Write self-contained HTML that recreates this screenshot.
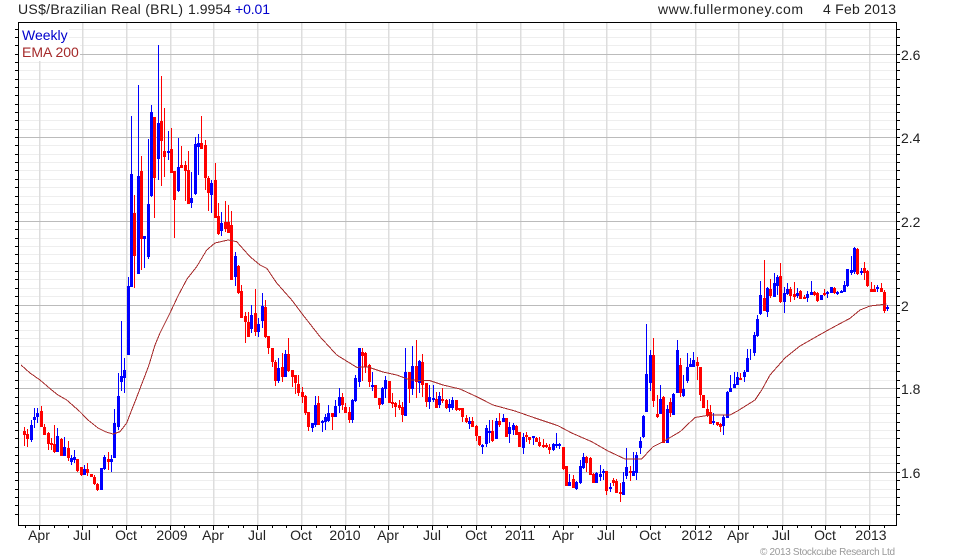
<!DOCTYPE html>
<html><head><meta charset="utf-8"><title>USD/BRL</title>
<style>
html,body{margin:0;padding:0;background:#fff}
svg{display:block}
text{font-family:"Liberation Sans",Arial,sans-serif;font-size:14px;fill:#222}
</style></head>
<body>
<svg xmlns="http://www.w3.org/2000/svg" width="980" height="560" viewBox="0 0 980 560">
<rect width="980" height="560" fill="#fff"/>
<g shape-rendering="crispEdges" fill="none">
<!-- minor horizontal -->
<path stroke="#eeeeee" stroke-width="1" d="M19 29.5H896M19 37.5H896M19 45.5H896M19 62.5H896M19 70.5H896M19 79.5H896M19 87.5H896M19 95.5H896M19 104.5H896M19 112.5H896M19 120.5H896M19 129.5H896M19 145.5H896M19 154.5H896M19 162.5H896M19 170.5H896M19 179.5H896M19 187.5H896M19 196.5H896M19 204.5H896M19 212.5H896M19 229.5H896M19 238.5H896M19 246.5H896M19 254.5H896M19 263.5H896M19 271.5H896M19 279.5H896M19 288.5H896M19 296.5H896M19 313.5H896M19 321.5H896M19 330.5H896M19 338.5H896M19 346.5H896M19 355.5H896M19 363.5H896M19 371.5H896M19 380.5H896M19 397.5H896M19 405.5H896M19 413.5H896M19 422.5H896M19 430.5H896M19 438.5H896M19 447.5H896M19 455.5H896M19 463.5H896M19 480.5H896M19 489.5H896M19 497.5H896M19 505.5H896M19 514.5H896"/>
<!-- vertical -->
<path stroke="#dddddd" stroke-width="1.5" d="M39.5 23V525M82.5 23V525M126.5 23V525M170.5 23V525M213.5 23V525M257.5 23V525M301.5 23V525M345.5 23V525M388.5 23V525M432.5 23V525M476.5 23V525M520.5 23V525M563.5 23V525M606.5 23V525M650.5 23V525M695.5 23V525M738.5 23V525M782.5 23V525M825.5 23V525M869.5 23V525"/>
<!-- major horizontal -->
<path stroke="#bbbbbb" stroke-width="1" d="M19 54.5H896M19 137.5H896M19 221.5H896M19 305.5H896M19 388.5H896M19 472.5H896"/>
<!-- legend background -->
<rect x="19" y="23" width="50" height="22" fill="#fff"/>
<rect x="19" y="45" width="61" height="16" fill="#fff"/>
<!-- frame -->
<path stroke="#000" stroke-width="1" d="M18.5 22.5H896.5V525.5H18.5Z"/>
<!-- y ticks -->
<path stroke="#000" stroke-width="1" d="M15 29.5H18M15 37.5H18M15 45.5H18M15 54.5H18M15 62.5H18M15 70.5H18M15 79.5H18M15 87.5H18M15 95.5H18M15 104.5H18M15 112.5H18M15 120.5H18M15 129.5H18M15 137.5H18M15 145.5H18M15 154.5H18M15 162.5H18M15 170.5H18M15 179.5H18M15 187.5H18M15 196.5H18M15 204.5H18M15 212.5H18M15 221.5H18M15 229.5H18M15 238.5H18M15 246.5H18M15 254.5H18M15 263.5H18M15 271.5H18M15 279.5H18M15 288.5H18M15 296.5H18M15 305.5H18M15 313.5H18M15 321.5H18M15 330.5H18M15 338.5H18M15 346.5H18M15 355.5H18M15 363.5H18M15 371.5H18M15 380.5H18M15 388.5H18M15 397.5H18M15 405.5H18M15 413.5H18M15 422.5H18M15 430.5H18M15 438.5H18M15 447.5H18M15 455.5H18M15 463.5H18M15 472.5H18M15 480.5H18M15 489.5H18M15 497.5H18M15 505.5H18M15 514.5H18"/>
<path stroke="#000" stroke-width="1" d="M897 29.5H900M897 37.5H900M897 45.5H900M897 54.5H900M897 62.5H900M897 70.5H900M897 79.5H900M897 87.5H900M897 95.5H900M897 104.5H900M897 112.5H900M897 120.5H900M897 129.5H900M897 137.5H900M897 145.5H900M897 154.5H900M897 162.5H900M897 170.5H900M897 179.5H900M897 187.5H900M897 196.5H900M897 204.5H900M897 212.5H900M897 221.5H900M897 229.5H900M897 238.5H900M897 246.5H900M897 254.5H900M897 263.5H900M897 271.5H900M897 279.5H900M897 288.5H900M897 296.5H900M897 305.5H900M897 313.5H900M897 321.5H900M897 330.5H900M897 338.5H900M897 346.5H900M897 355.5H900M897 363.5H900M897 371.5H900M897 380.5H900M897 388.5H900M897 397.5H900M897 405.5H900M897 413.5H900M897 422.5H900M897 430.5H900M897 438.5H900M897 447.5H900M897 455.5H900M897 463.5H900M897 472.5H900M897 480.5H900M897 489.5H900M897 497.5H900M897 505.5H900M897 514.5H900"/>
<!-- x ticks -->
<path stroke="#000" stroke-width="1" d="M39.5 526V530M82.5 526V530M126.5 526V530M170.5 526V530M213.5 526V530M257.5 526V530M301.5 526V530M345.5 526V530M388.5 526V530M432.5 526V530M476.5 526V530M520.5 526V530M563.5 526V530M606.5 526V530M650.5 526V530M695.5 526V530M738.5 526V530M782.5 526V530M825.5 526V530M869.5 526V530"/>
<path stroke="#000" stroke-width="1" d="M25.5 526V528M54.5 526V528M68.5 526V528M97.5 526V528M112.5 526V528M141.5 526V528M155.5 526V528M184.5 526V528M199.5 526V528M228.5 526V528M243.5 526V528M272.5 526V528M286.5 526V528M316.5 526V528M330.5 526V528M359.5 526V528M374.5 526V528M403.5 526V528M417.5 526V528M447.5 526V528M461.5 526V528M491.5 526V528M505.5 526V528M534.5 526V528M549.5 526V528M578.5 526V528M592.5 526V528M621.5 526V528M636.5 526V528M665.5 526V528M680.5 526V528M709.5 526V528M724.5 526V528M753.5 526V528M767.5 526V528M797.5 526V528M811.5 526V528M840.5 526V528M855.5 526V528M884.5 526V528"/>
<!-- red wicks -->
<path stroke="#ff0000" stroke-width="1" d="M24.5 427V446M27.5 429V447M41.5 406V427M44.5 424V435M48.5 432V450M51.5 438V450M54.5 425V453M61.5 438V456M68.5 441V461M77.5 459V472M81.5 467V476M87.5 463V476M91.5 474V477M94.5 475V485M97.5 483V491M108.5 452V470M134.5 195V288M141.5 156V270M154.5 117V218M161.5 76V186M164.5 108V177M171.5 128V173M174.5 171V238M181.5 146V168M185.5 161V201M188.5 151V204M201.5 116V148M205.5 140V190M208.5 176V211M215.5 163V218M218.5 203V235M225.5 201V232M228.5 205V233M231.5 211V280M238.5 265V294M241.5 285V318M245.5 312V343M248.5 312V337M255.5 289V336M265.5 300V338M268.5 336V354M272.5 348V367M275.5 360V386M282.5 353V382M288.5 338V372M292.5 370V387M295.5 375V394M298.5 375V396M302.5 387V403M305.5 395V415M308.5 412V431M318.5 396V423M332.5 413V430M342.5 393V410M345.5 403V413M349.5 407V423M362.5 348V381M365.5 352V373M369.5 364V387M375.5 385V398M379.5 398V409M389.5 381V403M392.5 393V408M395.5 402V417M399.5 400V410M402.5 402V422M409.5 372V403M416.5 340V398M422.5 354V397M426.5 383V407M436.5 392V408M442.5 388V403M446.5 399V409M456.5 400V411M459.5 408V411M462.5 408V422M466.5 415V423M472.5 417V427M476.5 425V441M479.5 436V446M492.5 420V442M499.5 413V427M506.5 418V437M516.5 425V435M519.5 432V447M526.5 432V442M529.5 437V444M536.5 437V442M539.5 437V447M543.5 439V448M546.5 443V448M549.5 444V454M563.5 447V470M566.5 466V486M573.5 475V488M586.5 456V472M590.5 457V475M593.5 473V483M606.5 471V495M613.5 478V486M616.5 479V493M620.5 483V502M630.5 466V481M653.5 338V407M657.5 395V418M663.5 396V443M670.5 398V417M680.5 358V397M697.5 357V380M700.5 367V401M703.5 395V408M707.5 400V417M710.5 405V424M717.5 422V426M720.5 423V432M740.5 373V380M764.5 260V311M770.5 279V298M780.5 263V303M790.5 287V302M794.5 282V300M800.5 290V299M804.5 295V299M814.5 291V296M817.5 292V302M824.5 289V296M834.5 287V294M857.5 248V275M864.5 262V280M867.5 270V287M871.5 282V292M874.5 285V292M881.5 283V292M884.5 290V313"/>
<!-- red bodies -->
<path stroke="#ff0000" stroke-width="3" d="M24.5 431V435M27.5 434V439M41.5 411V427M44.5 427V435M48.5 433V444M51.5 443V445M54.5 444V452M61.5 439V456M68.5 448V458M77.5 459V471M81.5 467V475M87.5 469V473M91.5 474V477M94.5 477V484M97.5 484V490M108.5 459V462M134.5 213V256M141.5 171V239M154.5 117V178M161.5 121V141M164.5 151V157M171.5 149V173M174.5 171V200M181.5 165V168M185.5 165V171M188.5 170V204M201.5 143V149M205.5 145V178M208.5 178V193M215.5 180V218M218.5 216V234M225.5 222V229M228.5 222V233M231.5 225V280M238.5 266V293M241.5 291V318M245.5 316V322M248.5 322V337M255.5 313V332M265.5 307V337M268.5 336V348M272.5 348V362M275.5 362V381M282.5 367V377M288.5 354V371M292.5 370V377M295.5 375V383M298.5 384V393M302.5 392V397M305.5 396V413M308.5 412V427M318.5 403V425M332.5 413V417M342.5 397V405M345.5 407V413M349.5 412V420M362.5 352V356M365.5 353V367M369.5 365V382M375.5 385V398M379.5 398V405M389.5 381V403M392.5 402V404M395.5 403V407M399.5 405V408M402.5 407V415M409.5 372V389M416.5 366V382M422.5 362V385M426.5 383V402M436.5 399V408M442.5 399V401M446.5 400V408M456.5 400V410M459.5 408V410M462.5 408V417M466.5 418V422M472.5 421V427M476.5 426V436M479.5 436V445M492.5 431V441M499.5 421V425M506.5 418V437M516.5 426V435M519.5 432V447M526.5 435V437M529.5 437V440M536.5 438V442M539.5 442V446M543.5 445V447M546.5 445V447M549.5 447V450M563.5 447V469M566.5 466V486M573.5 479V488M586.5 457V463M590.5 458V475M593.5 474V483M606.5 471V491M613.5 480V483M616.5 481V493M620.5 492V494M630.5 471V473M653.5 355V401M657.5 414V417M663.5 397V443M670.5 402V413M680.5 365V393M697.5 362V366M700.5 367V395M703.5 395V408M707.5 409V416M710.5 412V424M717.5 422V425M720.5 424V427M740.5 378V380M764.5 298V311M770.5 289V296M780.5 276V302M790.5 289V296M794.5 294V297M800.5 291V299M804.5 297V299M814.5 292V295M817.5 293V301M824.5 293V295M834.5 288V293M857.5 249V274M864.5 268V273M867.5 271V286M871.5 289V292M874.5 289V292M881.5 288V292M884.5 292V311"/>
<!-- blue wicks -->
<path stroke="#0000ff" stroke-width="1" d="M31.5 420V442M34.5 408V428M37.5 408V423M57.5 428V452M64.5 437V456M71.5 455V465M74.5 450V463M84.5 465V475M101.5 468V490M104.5 455V470M111.5 455V472M114.5 409V458M118.5 373V430M121.5 321V391M124.5 358V393M128.5 277V355M131.5 116V287M138.5 85V274M144.5 236V268M148.5 139V259M151.5 105V197M158.5 45V180M168.5 131V160M178.5 138V192M191.5 172V208M195.5 137V195M198.5 134V175M211.5 180V213M221.5 212V236M235.5 252V286M251.5 305V333M258.5 318V337M262.5 293V328M278.5 358V383M285.5 350V377M312.5 423V432M315.5 396V427M322.5 420V432M325.5 414V430M328.5 405V422M335.5 400V417M339.5 388V413M352.5 399V423M355.5 375V402M359.5 348V387M372.5 372V391M382.5 387V405M385.5 376V398M405.5 348V416M412.5 346V395M419.5 360V393M429.5 385V409M433.5 385V402M439.5 392V408M449.5 399V412M452.5 397V410M469.5 417V429M482.5 444V454M486.5 425V447M489.5 420V443M496.5 418V439M503.5 414V422M509.5 422V443M513.5 423V435M523.5 433V454M533.5 436V445M553.5 443V451M556.5 433V448M559.5 443V449M569.5 474V486M576.5 481V490M580.5 460V484M583.5 453V469M596.5 472V483M600.5 465V481M603.5 469V480M610.5 483V492M623.5 472V495M626.5 448V479M633.5 452V474M636.5 452V480M640.5 437V454M643.5 415V438M646.5 324V412M650.5 350V391M660.5 385V414M667.5 405V443M673.5 393V415M677.5 340V393M683.5 375V397M687.5 353V383M690.5 358V367M693.5 352V367M713.5 413V425M723.5 415V435M727.5 391V418M730.5 375V392M734.5 372V388M737.5 372V385M744.5 370V382M747.5 349V372M750.5 349V360M754.5 332V356M757.5 315V337M760.5 281V315M767.5 287V317M774.5 273V297M777.5 275V295M784.5 287V313M787.5 283V295M797.5 288V298M807.5 291V302M811.5 281V295M821.5 295V300M827.5 291V298M831.5 287V293M837.5 291V295M841.5 290V293M844.5 281V292M847.5 269V287M851.5 256V275M854.5 247V274M861.5 268V275M877.5 285V292M887.5 305V311"/>
<!-- blue bodies -->
<path stroke="#0000ff" stroke-width="3" d="M31.5 425V440M34.5 417V420M37.5 413V417M57.5 436V452M64.5 447V456M71.5 458V462M74.5 457V460M84.5 469V475M101.5 468V490M104.5 457V469M111.5 459V462M114.5 423V458M118.5 396V427M121.5 376V382M124.5 370V378M128.5 286V355M131.5 174V287M138.5 176V274M144.5 236V239M148.5 204V257M151.5 112V196M158.5 123V159M168.5 151V153M178.5 167V191M191.5 198V203M195.5 144V194M198.5 143V147M211.5 183V195M221.5 223V231M235.5 256V277M251.5 315V329M258.5 324V332M262.5 306V321M278.5 368V381M285.5 354V377M312.5 423V428M315.5 405V425M322.5 421V423M325.5 417V422M328.5 413V421M335.5 406V417M339.5 397V406M352.5 400V420M355.5 378V401M359.5 348V382M372.5 385V387M382.5 388V404M385.5 380V389M405.5 372V416M412.5 366V389M419.5 361V383M429.5 397V402M433.5 398V400M439.5 396V405M449.5 404V408M452.5 400V408M469.5 421V424M482.5 445V447M486.5 428V444M489.5 431V433M496.5 421V439M503.5 418V422M509.5 427V434M513.5 425V430M523.5 437V448M533.5 436V438M553.5 444V450M556.5 444V446M559.5 444V446M569.5 482V486M576.5 482V489M580.5 466V483M583.5 457V468M596.5 473V483M600.5 474V477M603.5 471V473M610.5 487V489M623.5 482V495M626.5 467V476M633.5 471V476M636.5 455V473M640.5 441V448M643.5 416V437M646.5 374V412M650.5 355V383M660.5 399V414M667.5 409V443M673.5 394V415M677.5 350V393M683.5 389V396M687.5 367V381M690.5 364V367M693.5 360V367M713.5 421V423M723.5 417V426M727.5 392V418M730.5 388V392M734.5 384V388M737.5 377V385M744.5 372V377M747.5 358V372M754.5 335V353M757.5 319V336M760.5 295V314M767.5 288V312M774.5 283V297M777.5 277V286M784.5 293V302M787.5 289V294M797.5 293V296M807.5 294V298M811.5 292V295M821.5 295V300M827.5 292V294M831.5 287V293M837.5 292V294M841.5 291V293M844.5 285V292M847.5 269V286M851.5 270V273M854.5 248V272M861.5 271V273M877.5 287V289M887.5 307V309"/>
<!-- EMA -->
<polyline stroke="#a52a2a" stroke-width="1" points="21,365 30,373 40,380 51.7,390 58,395 66.7,400 80,411.7 88,420 98,428 106,432 113,434 120,431.7 126.7,423 131.7,410 135,401.7 143.3,380 149,365 155,345 160,333 170,313 178,296 187,279 196.7,266.7 206.7,250 215,243 228,240 236.7,241.7 250,256.7 260,265 266.7,268.3 276.7,283 291.7,300 303,315 320,336.7 336.7,355 356.7,367.3 368,367 383,372 396.7,375 410,380 430,380.7 443,385 460,389 476.7,396.7 493,405 515,411 535,418 558,425.7 571.7,433 591.7,441.7 608,451 625,459 641.7,459 653,446.7 663,441.7 680,431.7 695,417.5 710,415 730,415 738,410.7 755,400 761.7,390 770,375 785,358 800,346 811.7,339.3 830,329 850,318.3 860,310 870,306 886.7,304"/>
</g>
<!-- header -->
<text x="18" y="14" textLength="165" lengthAdjust="spacing">US$/Brazilian Real (BRL)</text>
<text x="188" y="14" textLength="43" lengthAdjust="spacing">1.9954</text>
<text x="235" y="14" textLength="35" lengthAdjust="spacing" style="fill:#0000cc">+0.01</text>
<text x="658" y="14" textLength="145" lengthAdjust="spacing">www.fullermoney.com</text>
<text x="823" y="14" textLength="73" lengthAdjust="spacing">4 Feb 2013</text>
<text x="22" y="40" style="fill:#0000cc">Weekly</text>
<text x="22" y="57" style="fill:#a52a2a">EMA 200</text>
<!-- right labels -->
<text x="901" y="60">2.6</text>
<text x="901" y="143">2.4</text>
<text x="901" y="227">2.2</text>
<text x="901" y="311">2</text>
<text x="901" y="394">1.8</text>
<text x="901" y="478">1.6</text>
<!-- bottom labels -->
<g text-anchor="middle">
<text x="39" y="540">Apr</text><text x="82" y="540">Jul</text><text x="126" y="540">Oct</text><text x="172" y="540">2009</text>
<text x="213" y="540">Apr</text><text x="257" y="540">Jul</text><text x="301" y="540">Oct</text><text x="345" y="540">2010</text>
<text x="388" y="540">Apr</text><text x="432" y="540">Jul</text><text x="476" y="540">Oct</text><text x="520" y="540">2011</text>
<text x="563" y="540">Apr</text><text x="606" y="540">Jul</text><text x="650" y="540">Oct</text><text x="697" y="540">2012</text>
<text x="738" y="540">Apr</text><text x="781" y="540">Jul</text><text x="825" y="540">Oct</text><text x="871" y="540">2013</text>
</g>
<text x="760" y="555" textLength="135" lengthAdjust="spacing" style="font-size:10px;fill:#999999">© 2013 Stockcube Research Ltd</text>
</svg>
</body></html>
